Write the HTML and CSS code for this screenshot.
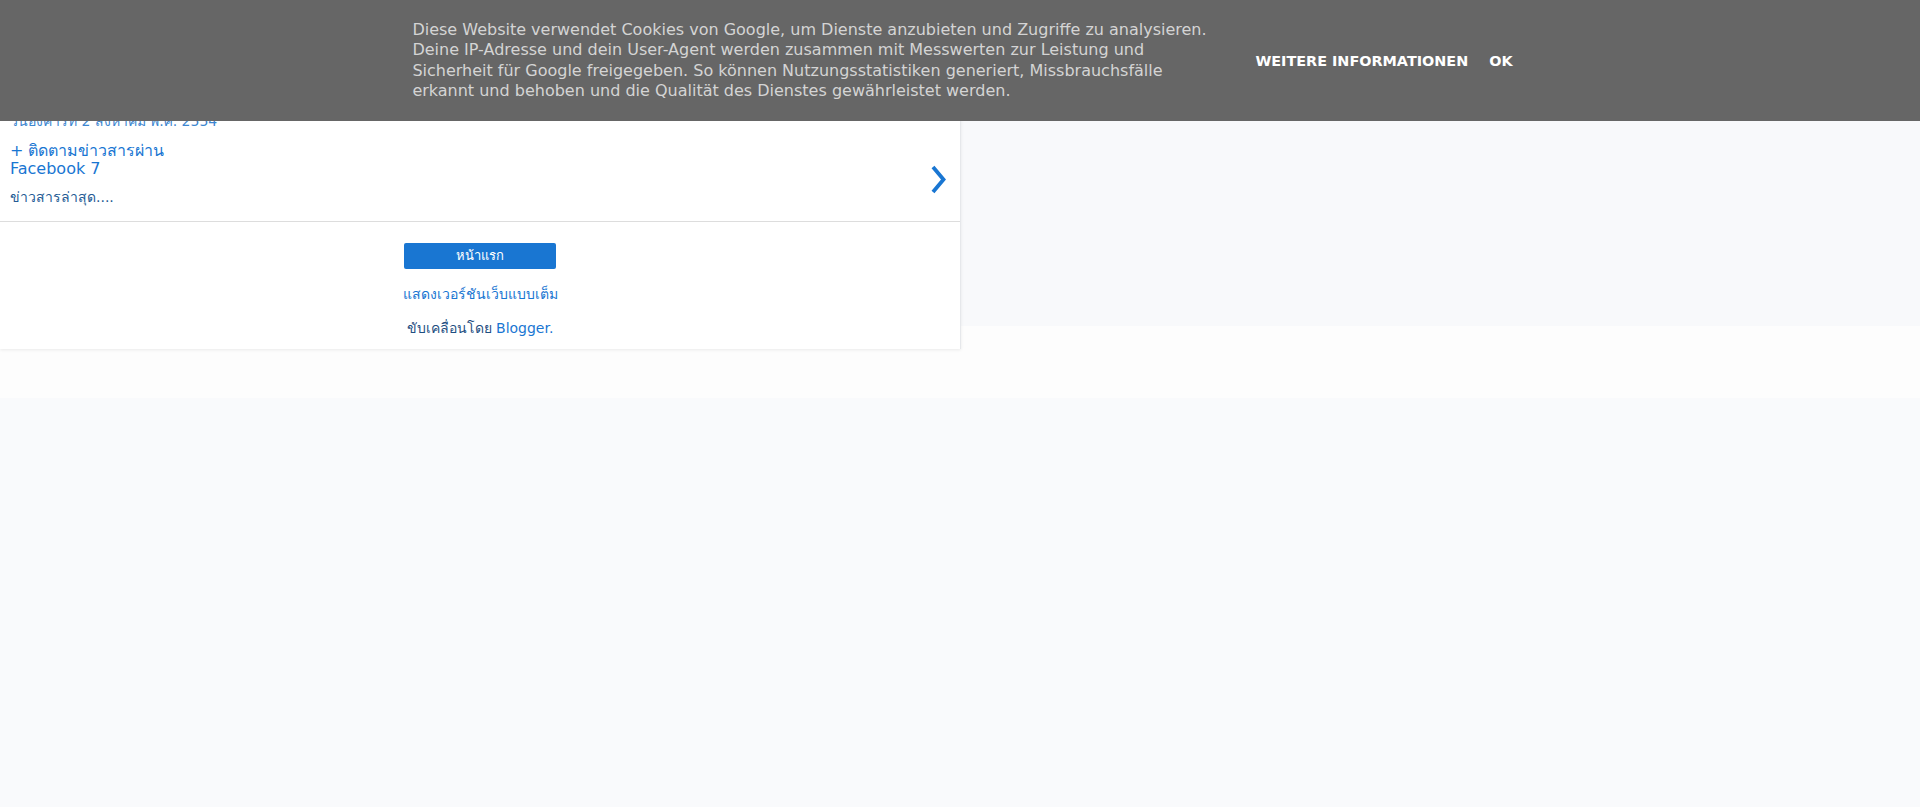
FILE: index.html
```html
<!DOCTYPE html>
<html lang="th">
<head>
<meta charset="utf-8">
<title>Blog</title>
<link rel="stylesheet" href="styles.css">
</head>
<body>
<div class="page">
  <div class="card">
    <div class="blog-header">
      <h1 class="blog-title">บล็อก</h1>
    </div>
    <div class="post-item">
      <div class="post-date">วันอังคารที่ 2 สิงหาคม พ.ศ. 2554</div>
      <div class="post-row">
        <div class="post-text">
          <a class="post-title" href="#">+ ติดตามข่าวสารผ่าน<br>Facebook 7</a>
          <div class="post-snippet">ข่าวสารล่าสุด....</div>
        </div>
        <svg class="chevron" width="15" height="29" viewBox="0 0 15 29" aria-hidden="true">
          <polyline points="2,2 12.5,14.5 2,27" fill="none" stroke="#1976d2" stroke-width="3.8"/>
        </svg>
      </div>
    </div>
    <div class="card-footer">
      <a class="home-btn" href="#">หน้าแรก</a>
      <a class="web-link" href="#">แสดงเวอร์ชันเว็บแบบเต็ม</a>
      <div class="powered">ขับเคลื่อนโดย <a href="#">Blogger.</a></div>
    </div>
  </div>
</div>
<div class="cookie-bar">
  <div class="cookie-text">Diese Website verwendet Cookies von Google, um Dienste anzubieten und Zugriffe zu analysieren. Deine IP-Adresse und dein User-Agent werden zusammen mit Messwerten zur Leistung und Sicherheit für Google freigegeben. So können Nutzungsstatistiken generiert, Missbrauchsfälle erkannt und behoben und die Qualität des Dienstes gewährleistet werden.</div>
  <div class="cookie-buttons">
    <a class="cookie-btn" href="#">Weitere Informationen</a>
    <a class="cookie-btn" href="#">OK</a>
  </div>
</div>
</body>
</html>
```
FILE: styles.css
```css
html, body {
  margin: 0;
  padding: 0;
}
body {
  font-family: "DejaVu Sans", sans-serif;
  min-height: 807px;
  background: linear-gradient(#f8f9fb 0, #f8f9fb 326px, #fdfdfd 326px, #fdfdfd 398px, #f9fafc 398px);
}
a {
  text-decoration: none;
}
.card {
  width: 960px;
  background: #fff;
  border-right: 1px solid #e6e8eb;
  box-shadow: 0 1px 3px rgba(0, 0, 0, 0.08);
}
.blog-header {
  height: 100px;
  box-sizing: border-box;
  padding: 30px 10px 0;
}
.blog-title {
  margin: 0;
  font-size: 24px;
  font-weight: normal;
  color: #333;
}
.post-item {
  padding: 13px 0 15px 10px;
}
.post-date {
  font-size: 14px;
  line-height: 17px;
  color: #3d86d0;
}
.post-row {
  display: flex;
  align-items: flex-end;
  margin-top: 12px;
}
.post-text {
  flex: 1;
}
.post-title {
  display: block;
  font-size: 16px;
  line-height: 18px;
  color: #1976d2;
}
.post-snippet {
  margin-top: 11px;
  font-size: 14px;
  line-height: 17px;
  color: #245b94;
}
.chevron {
  display: block;
  margin: 0 14px 12px 0;
}
.card-footer {
  border-top: 1px solid #dddddd;
  padding: 21px 0 12px;
  text-align: center;
}
.home-btn {
  display: block;
  width: 152px;
  height: 26px;
  margin: 0 auto;
  line-height: 26px;
  border-radius: 2px;
  background: #1976d2;
  color: #fff;
  font-size: 13px;
}
.web-link {
  display: block;
  margin-top: 17px;
  font-size: 14px;
  line-height: 17px;
  color: #1976d2;
}
.powered {
  margin-top: 17px;
  font-size: 14px;
  line-height: 17px;
  color: #1f4f82;
}
.powered a {
  color: #1976d2;
}
.cookie-bar {
  position: fixed;
  top: 0;
  left: 0;
  right: 0;
  height: 121px;
  background: #666;
  display: flex;
  justify-content: center;
  align-items: center;
}
.cookie-text {
  width: 800px;
  margin: 0 20px;
  font-size: 16px;
  line-height: 20.4px;
  color: #d4d4d4;
}
.cookie-buttons {
  display: flex;
  gap: 9px;
  margin: 0 9px 0 17px;
}
.cookie-btn {
  padding: 3px 6px;
  font-size: 14.4px;
  font-weight: bold;
  text-transform: uppercase;
  color: #fff;
}
```
